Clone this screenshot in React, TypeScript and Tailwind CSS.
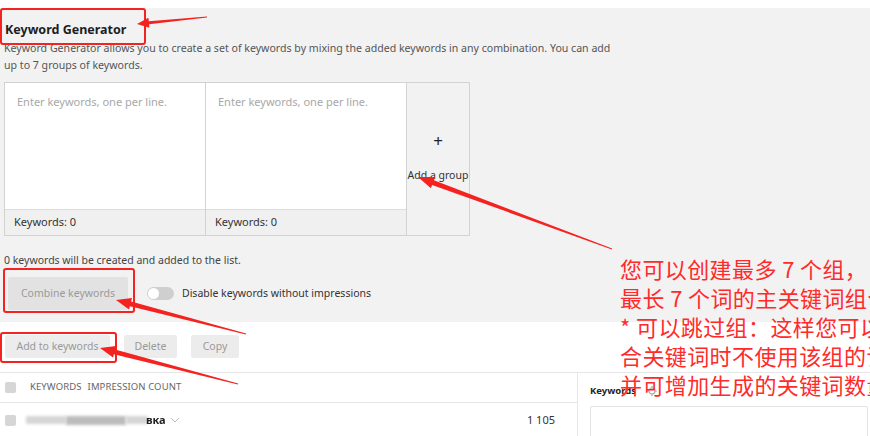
import React from "react";

type P = [number, number];
function arrowPts(tail: P, tip: P, headLen: number, headW: number, sTail: number, sHead: number) {
  const dx = tip[0] - tail[0];
  const dy = tip[1] - tail[1];
  const L = Math.hypot(dx, dy);
  const d: P = [dx / L, dy / L];
  const n: P = [-d[1], d[0]];
  const base: P = [tip[0] - d[0] * headLen, tip[1] - d[1] * headLen];
  const pts: P[] = [
    [tail[0] + (n[0] * sTail) / 2, tail[1] + (n[1] * sTail) / 2],
    [base[0] + (n[0] * sHead) / 2, base[1] + (n[1] * sHead) / 2],
    [base[0] + (n[0] * headW) / 2, base[1] + (n[1] * headW) / 2],
    tip,
    [base[0] - (n[0] * headW) / 2, base[1] - (n[1] * headW) / 2],
    [base[0] - (n[0] * sHead) / 2, base[1] - (n[1] * sHead) / 2],
    [tail[0] - (n[0] * sTail) / 2, tail[1] - (n[1] * sTail) / 2],
  ];
  return pts.map((p) => `${p[0].toFixed(1)},${p[1].toFixed(1)}`).join(" ");
}

function GroupBox() {
  return (
    <div className="w-[202px] h-full flex flex-col bg-white border border-[#d2d2d2] -ml-px first:ml-0">
      <div className="flex-1 pl-[12px] pt-[11px] text-[11px] leading-[16px] text-[#a8a8a8]">
        Enter keywords, one per line.
      </div>
      <div className="h-[26px] bg-[#f0f0f0] border-t border-[#dcdcdc] pl-[9px] flex items-center text-[11px] text-[#333]">
        Keywords: 0
      </div>
    </div>
  );
}

export default function App() {
  return (
    <div className="w-[870px] h-[436px] relative overflow-hidden bg-white font-['Noto_Sans',sans-serif]">
      <div className="h-[8px] bg-white" />
      <div className="h-[314px] bg-[#f2f2f2] pl-[4px] pt-[14px]">
        <h1 className="pl-[1px] text-[12.5px] leading-[16px] font-bold text-[#1e1e1e]">Keyword Generator</h1>
        <p className="mt-[2px] w-[614px] text-[10.6px] leading-[17px] text-[#555]">
          Keyword Generator allows you to create a set of keywords by mixing the added keywords in any combination. You can add up to 7 groups of keywords.
        </p>
        <div className="mt-[8px] h-[154px] flex">
          <GroupBox />
          <GroupBox />
          <div className="w-[64px] h-full -ml-px border border-[#d2d2d2] flex flex-col items-center pt-[48px]">
            <div className="text-[17px] leading-[20px] text-[#222]">+</div>
            <div className="mt-[17px] text-[10.5px] leading-[14px] text-[#333] whitespace-nowrap">Add a group</div>
          </div>
        </div>
        <p className="mt-[16px] text-[10.5px] leading-[16px] text-[#444]">0 keywords will be created and added to the list.</p>
        <div className="mt-[9px] flex items-center">
          <div className="ml-[4px] w-[120px] h-[33px] bg-[#e2e2e2] rounded-[2px] flex items-center justify-center text-[10.5px] text-[#9a9a9a]">
            Combine keywords
          </div>
          <div className="ml-[19px] w-[27px] h-[13px] rounded-full bg-[#cfcfcf] relative">
            <div className="absolute left-[1px] top-[1px] w-[11px] h-[11px] rounded-full bg-white" />
          </div>
          <span className="ml-[8px] text-[10.5px] text-[#333]">Disable keywords without impressions</span>
        </div>
      </div>

      <div className="pt-[13px] pl-[5px] flex gap-[14px] text-[10.5px] text-[#999]">
        <div className="w-[105px] h-[23px] bg-[#ececec] rounded-[2px] flex items-center justify-center">Add to keywords</div>
        <div className="w-[53px] h-[23px] bg-[#ececec] rounded-[2px] flex items-center justify-center">Delete</div>
        <div className="w-[48px] h-[23px] bg-[#ececec] rounded-[2px] flex items-center justify-center">Copy</div>
      </div>

      <div className="mt-[14px] flex h-[80px]">
        <div className="w-[577px] border-t border-[#e6e6e6]">
          <div className="h-[30px] flex items-center pl-[5px] border-b border-[#e6e6e6]">
            <div className="w-[11px] h-[11px] rounded-[2px] bg-[#d6d6d6]" />
            <span className="ml-[14px] text-[9.5px] text-[#666] tracking-[0.1px]">KEYWORDS</span>
            <span className="ml-[6px] text-[9.5px] text-[#666] tracking-[0.1px]">IMPRESSION COUNT</span>
          </div>
          <div className="h-[34px] flex items-center pl-[5px] pr-[22px]">
            <div className="w-[11px] h-[11px] rounded-[2px] bg-[#d6d6d6]" />
            <div className="ml-[10px] flex items-center">
              <div className="w-[40px] h-[8px] bg-[#d6d6d6] blur-[1.5px]" />
              <div className="w-[60px] h-[9px] bg-[#bcbcbc] blur-[1.5px]" />
              <div className="w-[22px] h-[8px] bg-[#d6d6d6] blur-[1.5px]" />
              <span className="text-[11px] font-bold text-[#222] blur-[0.4px] -ml-[2px]">вка</span>
              <svg width="10" height="8" viewBox="0 0 10 8" className="ml-[4px]">
                <path d="M1 2 L5 6 L9 2" fill="none" stroke="#bbb" strokeWidth="1" />
              </svg>
            </div>
            <span className="ml-auto text-[11px] text-[#333]">1 105</span>
          </div>
        </div>
        <div className="flex-1 border-t border-l border-[#e6e6e6] pl-[12px] pt-[12px]">
          <div className="flex items-center h-[12px]">
            <span className="text-[9.5px] font-bold text-[#222]">Keywords</span>
            <svg width="12" height="12" viewBox="0 0 12 12" className="ml-[10px]">
              <circle cx="6" cy="6" r="3" fill="none" stroke="#aaa" strokeWidth="1.2" />
              <path d="M6 1v2M6 9v2M1 6h2M9 6h2" stroke="#aaa" strokeWidth="1.2" />
            </svg>
          </div>
          <div className="mt-[9px] mr-[2px] h-[40px] border border-[#e3e3e3] rounded-[2px] bg-white" />
        </div>
      </div>

      {/* annotations */}
      <div className="absolute left-0 top-[8px] w-[146px] h-[37px] border-2 border-[#f4231f] rounded-[3px]" />
      <div className="absolute left-[3px] top-[268px] w-[132px] h-[45px] border-2 border-[#f4231f] rounded-[3px]" />
      <div className="absolute left-0 top-[332px] w-[117px] h-[31px] border-2 border-[#f4231f] rounded-[3px]" />

      <svg className="absolute inset-0 pointer-events-none" width="870" height="436">
        <polygon points={arrowPts([207, 17], [137, 24], 12, 10, 0.8, 3)} fill="#f4231f" />
        <polygon points={arrowPts([612, 249], [418, 177], 16, 12, 0.8, 5)} fill="#f4231f" />
        <polygon points={arrowPts([246, 334], [116, 300], 15, 12, 0.8, 5)} fill="#f4231f" />
        <polygon points={arrowPts([238, 384], [100, 348], 15, 12, 0.8, 5)} fill="#f4231f" />
      </svg>

      <div className="absolute left-[620px] top-[254px] text-[22px] leading-[29px] tracking-[0.4px] text-[#ff2b2b] whitespace-nowrap font-['Noto_Sans_CJK_SC',sans-serif]">
        <div>您可以创建最多 7 个组，</div>
        <div>最长 7 个词的主关键词组合</div>
        <div>* 可以跳过组：这样您可以在组</div>
        <div>合关键词时不使用该组的词，</div>
        <div>并可增加生成的关键词数量</div>
      </div>
    </div>
  );
}
